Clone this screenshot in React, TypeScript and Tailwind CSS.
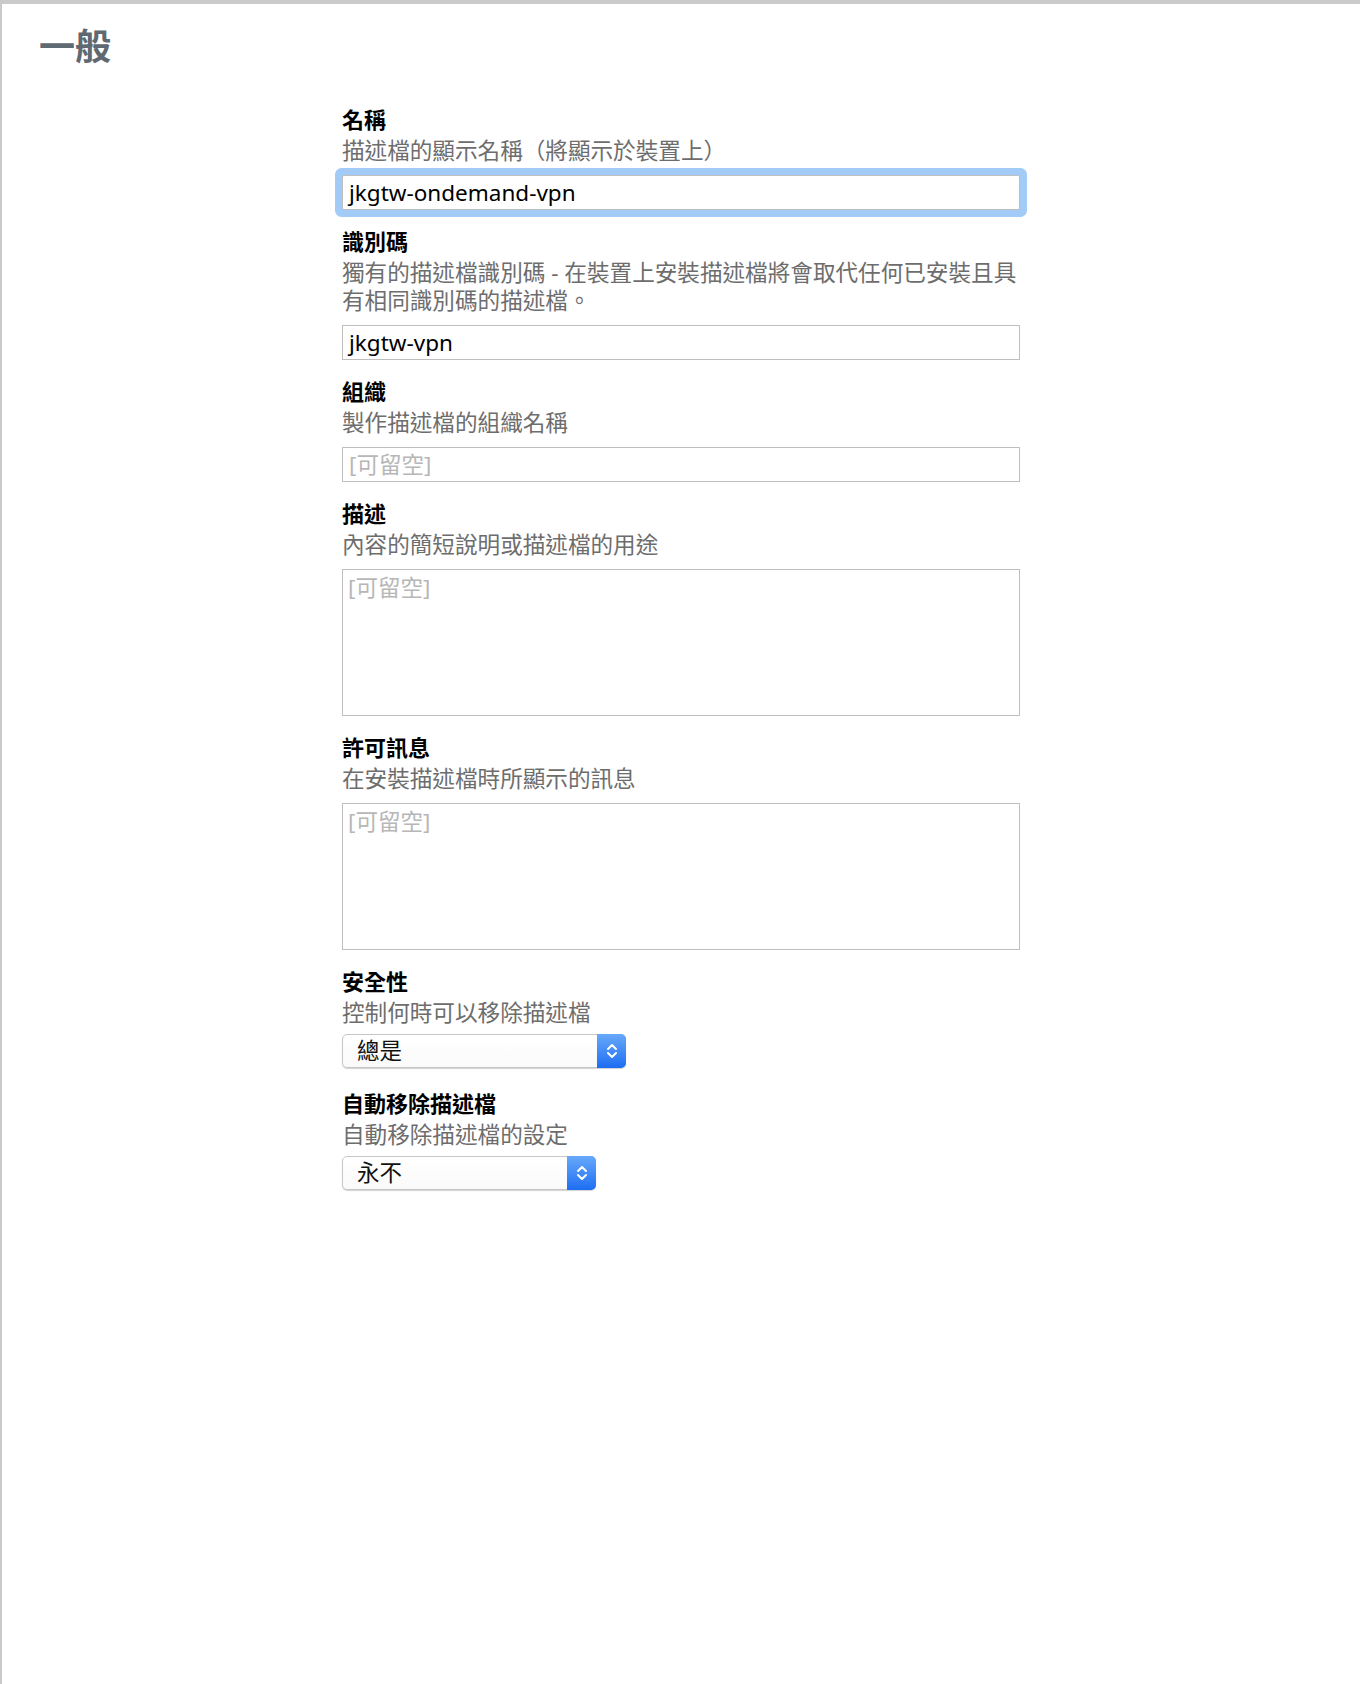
import React from "react";

const font = { fontFamily: '"Noto Sans", "Noto Sans CJK TC", sans-serif' };

function Field({
  label,
  desc,
  children,
  controlGap = "mt-[10px]",
}: {
  label: string;
  desc: string;
  children: React.ReactNode;
  controlGap?: string;
}) {
  return (
    <div>
      <div className="h-[30px] text-[22px] font-bold leading-[30px] text-black">{label}</div>
      <div className="mt-[3px] text-[22.6px] leading-[28px] text-[#6d6d6d]">{desc}</div>
      <div className={controlGap}>{children}</div>
    </div>
  );
}

function TextInput({ value, focused }: { value?: string; focused?: boolean }) {
  return (
    <div
      className={
        "flex h-[35px] w-full items-center border border-[#bfbfbf] bg-white px-[6px] text-[22.5px] " +
        (focused ? "rounded-[2px] shadow-[0_0_0_7px_#a3cbf8]" : "")
      }
    >
      {value ? (
        <span className="text-black">{value}</span>
      ) : (
        <span className="text-[#b7b7b7]">[可留空]</span>
      )}
    </div>
  );
}

function TextArea() {
  return (
    <div className="h-[147px] w-full border border-[#bfbfbf] bg-white px-[5px] pt-[4px] text-[22.5px] leading-[28px] text-[#b7b7b7]">
      [可留空]
    </div>
  );
}

function Select({ value, width }: { value: string; width: string }) {
  return (
    <div
      className={
        "flex h-[34px] items-stretch rounded-[5px] border border-[#c6c6c6] bg-gradient-to-b from-white to-[#fafafa] shadow-[0_1px_1px_rgba(0,0,0,0.18)] " +
        width
      }
    >
      <div className="flex flex-1 items-center pl-[14px] text-[22.5px] text-[#111]">{value}</div>
      <div className="-my-px -mr-px flex w-[29px] items-center justify-center rounded-r-[5px] bg-gradient-to-b from-[#67a8fa] to-[#1d6df2]">
        <svg width="14" height="24" viewBox="0 0 14 24" fill="none">
          <polyline points="3,10 7,6 11,10" stroke="white" strokeWidth="2" strokeLinecap="round" strokeLinejoin="round" />
          <polyline points="3,14 7,18 11,14" stroke="white" strokeWidth="2" strokeLinecap="round" strokeLinejoin="round" />
        </svg>
      </div>
    </div>
  );
}

export default function App() {
  return (
    <div
      className="min-h-[1684px] border-t-4 border-l-2 border-[#cacaca] bg-white"
      style={font}
    >
      <h1 className="ml-[37px] mt-[23px] text-[36px] font-bold leading-[40px] text-[#5f6971]">一般</h1>
      <div className="mx-auto mt-[37px] flex w-[678px] flex-col gap-[16px]">
        <Field label="名稱" desc="描述檔的顯示名稱（將顯示於裝置上）">
          <TextInput value="jkgtw-ondemand-vpn" focused />
        </Field>
        <Field
          label="識別碼"
          desc="獨有的描述檔識別碼 - 在裝置上安裝描述檔將會取代任何已安裝且具有相同識別碼的描述檔。"
        >
          <TextInput value="jkgtw-vpn" />
        </Field>
        <Field label="組織" desc="製作描述檔的組織名稱">
          <TextInput />
        </Field>
        <Field label="描述" desc="內容的簡短說明或描述檔的用途">
          <TextArea />
        </Field>
        <Field label="許可訊息" desc="在安裝描述檔時所顯示的訊息">
          <TextArea />
        </Field>
        <Field label="安全性" desc="控制何時可以移除描述檔" controlGap="mt-[7px]">
          <Select value="總是" width="w-[284px]" />
        </Field>
        <div className="mt-[4px]">
          <Field label="自動移除描述檔" desc="自動移除描述檔的設定" controlGap="mt-[7px]">
            <Select value="永不" width="w-[254px]" />
          </Field>
        </div>
      </div>
    </div>
  );
}
